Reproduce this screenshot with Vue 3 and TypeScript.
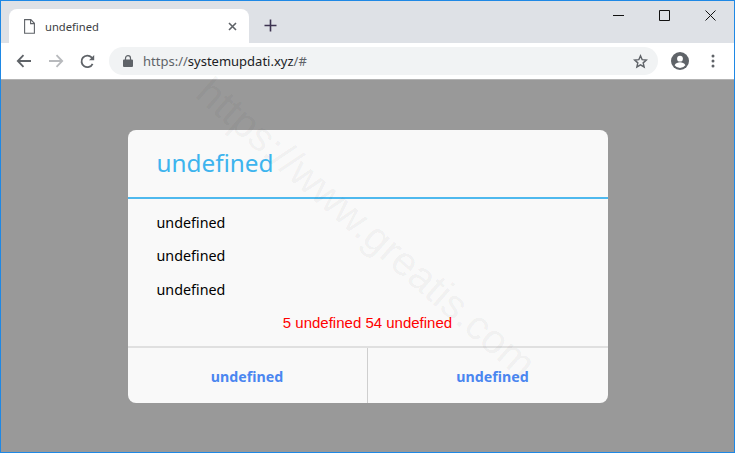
<template>
  <div class="window">
    <div class="tabstrip">
      <div class="tab">
        <svg class="doc" width="11" height="15" viewBox="0 0 11 15" fill="none" stroke="#5f6368" stroke-width="1.1">
          <path d="M.6 .6h6.200L10.400 4.300v10H.6z" />
          <path d="M6.600 .8v3.800h3.800" />
        </svg>
        <span class="tab-title">undefined</span>
        <svg class="tab-close" width="9" height="9" viewBox="0 0 9 9" stroke="#5f6368" stroke-width="1.6">
          <path d="M1 1l7 7M8 1L1 8" />
        </svg>
      </div>
      <svg class="new-tab" width="13" height="13" viewBox="0 0 13 13" stroke="#3c3350" stroke-width="1.6">
        <path d="M6.500 .5v12M.5 6.500h12" />
      </svg>
      <div class="win-controls">
        <svg width="11" height="11" viewBox="0 0 11 11" stroke="#111" stroke-width="1"><path d="M0 5.500h11" /></svg>
        <svg width="11" height="11" viewBox="0 0 11 11" fill="none" stroke="#111" stroke-width="1"><path d="M.5 .5h10v10H.5z" /></svg>
        <svg width="11" height="11" viewBox="0 0 11 11" stroke="#111" stroke-width="1"><path d="M.5 .5l10 10M10.500 .5l-10 10" /></svg>
      </div>
    </div>

    <div class="toolbar">
      <svg width="16" height="14" viewBox="0 0 16 14" fill="none" stroke="#5f6368" stroke-width="1.8">
        <path d="M15 7H2M7.500 1.200L1.800 7l5.700 5.800" />
      </svg>
      <svg width="16" height="14" viewBox="0 0 16 14" fill="none" stroke="#b8babd" stroke-width="1.8">
        <path d="M1 7h13M8.500 1.200L14.200 7l-5.700 5.800" />
      </svg>
      <svg width="15" height="15" viewBox="0 0 15 15" fill="none" stroke="#5f6368" stroke-width="1.8">
        <path d="M12.600 9.800A5.800 5.800 0 1 1 11.600 3.400L13 4.800" />
        <path d="M14.200 1v5.200H9z" fill="#5f6368" stroke="none" />
      </svg>
      <div class="omnibox">
        <svg width="10" height="12" viewBox="0 0 10 12" fill="#5f6368">
          <path d="M1 4.500h8a1 1 0 0 1 1 1V11a1 1 0 0 1-1 1H1a1 1 0 0 1-1-1V5.500a1 1 0 0 1 1-1z" />
          <path d="M2.500 5V3.200a2.500 2.500 0 0 1 5 0V5" fill="none" stroke="#5f6368" stroke-width="1.200" />
        </svg>
        <span class="url"><span class="dim">https://</span>systemupdati.xyz<span class="dim">/#</span></span>
        <svg class="star" width="15" height="15" viewBox="0 0 24 24" fill="none" stroke="#5f6368" stroke-width="2.300">
          <path d="M12 3l2.700 6.100 6.600.7-5 4.400 1.500 6.500L12 17.300l-5.800 3.400 1.500-6.500-5-4.400 6.600-.7z" />
        </svg>
      </div>
      <svg class="avatar" width="18" height="18" viewBox="0 0 18 18">
        <circle cx="9" cy="9" r="9" fill="#5f6368" />
        <circle cx="9" cy="6.700" r="2.900" fill="#fff" />
        <path d="M3.600 13.200c1-2 3.500-2.900 5.400-2.900s4.400.9 5.400 2.900A7 7 0 0 1 9 16a7 7 0 0 1-5.400-2.800z" fill="#fff" />
      </svg>
      <svg class="menu" width="4" height="14" viewBox="0 0 4 14" fill="#5f6368">
        <circle cx="2" cy="2" r="1.500" />
        <circle cx="2" cy="7" r="1.500" />
        <circle cx="2" cy="12" r="1.500" />
      </svg>
    </div>

    <main class="page">
      <section class="dialog">
        <h1 class="dialog-title">undefined</h1>
        <div class="dialog-body">
          <p v-for="(line, i) in lines" :key="i" class="line">{{ line }}</p>
          <p class="timer">{{ timer }}</p>
        </div>
        <div class="dialog-actions">
          <button v-for="(label, i) in actions" :key="i" class="action">{{ label }}</button>
        </div>
      </section>
      <div class="watermark">https://www.greatis.com</div>
    </main>
  </div>
</template>

<script setup lang="ts">
const lines: string[] = ['undefined', 'undefined', 'undefined']
const timer = '5 undefined 54 undefined'
const actions: string[] = ['undefined', 'undefined']
</script>

<style scoped>
.window {
  width: 735px;
  height: 453px;
  box-sizing: border-box;
  border: 1px solid #1e88e5;
  display: flex;
  flex-direction: column;
  font-family: "Noto Sans", sans-serif;
}

.tabstrip {
  height: 42px;
  flex: none;
  background: #dee1e6;
  display: flex;
  align-items: flex-end;
  padding-left: 8px;
}

.tab {
  width: 240px;
  height: 34px;
  box-sizing: border-box;
  background: #fff;
  border-radius: 8px 8px 0 0;
  display: flex;
  align-items: center;
  padding: 0 12px 0 15px;
}

.tab-title {
  margin-left: 10px;
  font-size: 11.2px;
  color: #3c4043;
}

.tab-close {
  margin-left: auto;
}

.new-tab {
  margin: 0 0 11px 15px;
}

.win-controls {
  margin-left: auto;
  align-self: flex-start;
  display: flex;
  gap: 35px;
  padding: 9px 18px 0 0;
}

.win-controls svg {
  display: block;
}

.toolbar {
  height: 36px;
  flex: none;
  box-sizing: border-box;
  background: #fff;
  display: flex;
  align-items: center;
  padding-left: 15px;
  gap: 16px;
}

.omnibox {
  width: 549px;
  height: 28px;
  margin-left: -2px;
  box-sizing: border-box;
  background: #f1f3f4;
  border-radius: 14px;
  display: flex;
  align-items: center;
  padding: 0 10px 0 14px;
}

.url {
  margin-left: 10px;
  font-size: 13px;
  color: #202124;
}

.dim {
  color: #5f6368;
}

.star {
  margin-left: auto;
}

.avatar {
  margin-left: -3px;
}

.menu {
  margin-left: 6px;
}

.page {
  position: relative;
  flex: 1;
  background: #999;
  display: flex;
  justify-content: center;
  align-items: flex-start;
  border-top: 1px solid #b3b3b3;
}

.dialog {
  width: 480px;
  margin-top: 50px;
  background: #f9f9f9;
  border-radius: 8px;
  overflow: hidden;
}

.dialog-title {
  margin: 0;
  height: 69px;
  box-sizing: border-box;
  padding: 16px 29px 0;
  border-bottom: 2px solid #4fb9ee;
  font-size: 24.3px;
  line-height: 34px;
  font-weight: 400;
  color: #3db4ee;
}

.dialog-body {
  padding: 7px 29px 0;
  height: 147px;
  box-sizing: border-box;
}

.line {
  margin: 0;
  height: 33.400px;
  line-height: 33px;
  font-size: 14.3px;
  color: #000;
}

.timer {
  margin: 0;
  line-height: 33px;
  font-family: "Liberation Sans", Arial, sans-serif;
  font-size: 15px;
  color: #f00;
  text-align: center;
}

.dialog-actions {
  display: grid;
  grid-template-columns: 239px 241px;
  border-top: 2px solid #e0e0e0;
  height: 57px;
  box-sizing: border-box;
}

.action {
  border: 0;
  padding: 2px 0 0;
  background: transparent;
  font-family: "Noto Sans", sans-serif;
  font-size: 14.2px;
  font-weight: 700;
  color: #4a86f0;
}

.action + .action {
  border-left: 1px solid #cfcfcf;
  padding-left: 10px;
}

.watermark {
  position: absolute;
  left: 365px;
  top: 148px;
  transform: translate(-50%, -50%) rotate(41deg);
  font-family: "Liberation Sans", Arial, sans-serif;
  font-size: 41px;
  white-space: nowrap;
  color: rgba(0, 0, 0, 0.05);
  pointer-events: none;
}
</style>
